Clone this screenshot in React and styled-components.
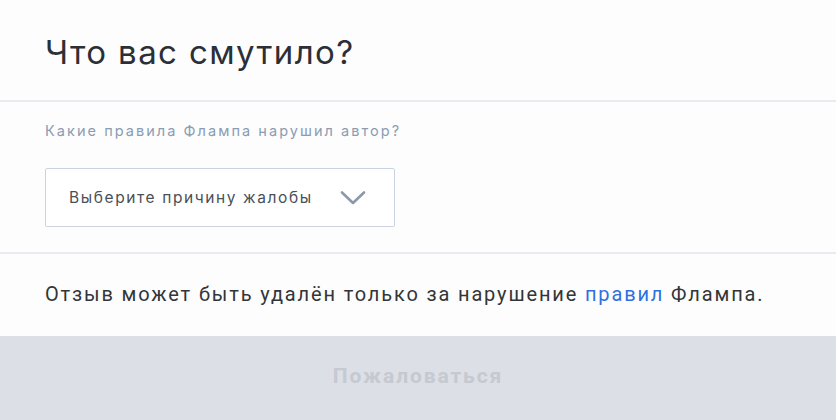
import React from "react";
import styled, { createGlobalStyle } from "styled-components";

const Global = createGlobalStyle`
  html, body { margin: 0; padding: 0; background: #fdfdfd; }
  body { font-family: Inter, "Noto Sans", sans-serif; }
`;

function Chevron() {
  return (
    <svg width="26" height="16" viewBox="0 0 26 16" fill="none">
      <path d="M2 2.5 L13 13 L24 2.5" stroke="#8c99aa" strokeWidth="2.6" strokeLinecap="round" strokeLinejoin="round" />
    </svg>
  );
}

export default function App() {
  return (
    <Wrapper>
      <Global />
      <Header>
        <Title>Что вас смутило?</Title>
      </Header>
      <Body>
        <Label>Какие правила Флампа нарушил автор?</Label>
        <Select>
          <SelectText>Выберите причину жалобы</SelectText>
          <Chevron />
        </Select>
      </Body>
      <Note>
        Отзыв может быть удалён только за нарушение <Link>правил</Link> Флампа.
      </Note>
      <Submit disabled>Пожаловаться</Submit>
    </Wrapper>
  );
}

const Wrapper = styled.div`
  width: 836px;
  height: 420px;
  display: flex;
  flex-direction: column;
  overflow: hidden;
`;
const Header = styled.div`
  height: 102px;
  box-sizing: border-box;
  padding: 4px 45px 0;
  display: flex;
  align-items: center;
  border-bottom: 2px solid #e8ecf1;
`;
const Title = styled.h1`
  margin: 0;
  font-size: 33px;
  font-weight: 400;
  color: #2b2f36;
  letter-spacing: 1.4px;
`;
const Body = styled.div`
  padding: 19px 45px 25px;
  border-bottom: 2px solid #e8ecf1;
`;
const Label = styled.div`
  font-size: 14.5px;
  color: #8a9cb3;
  letter-spacing: 2.05px;
  line-height: 20px;
`;
const Select = styled.div`
  margin-top: 27px;
  width: 350px;
  height: 59px;
  box-sizing: border-box;
  border: 1px solid #c9d3e1;
  border-radius: 2px;
  background: #fff;
  display: flex;
  align-items: center;
  justify-content: space-between;
  padding: 0 28px 0 23px;
`;
const SelectText = styled.span`
  font-size: 15.5px;
  color: #4a4f58;
  letter-spacing: 1.6px;
`;
const Note = styled.div`
  height: 82px;
  box-sizing: border-box;
  padding: 0 45px 2px;
  display: flex;
  align-items: center;
  font-family: Roboto, "Liberation Sans", sans-serif;
  font-size: 20px;
  color: #333538;
  letter-spacing: 1.85px;
  white-space: pre;
`;
const Link = styled.a`
  color: #2f6fe0;
`;
const Submit = styled.button`
  flex: 1;
  border: none;
  background: #dcdfe6;
  color: #c5c9d1;
  font-family: Roboto, "Liberation Sans", sans-serif;
  font-weight: 700;
  font-size: 21px;
  letter-spacing: 1.9px;
  padding: 0 0 4px;
`;
